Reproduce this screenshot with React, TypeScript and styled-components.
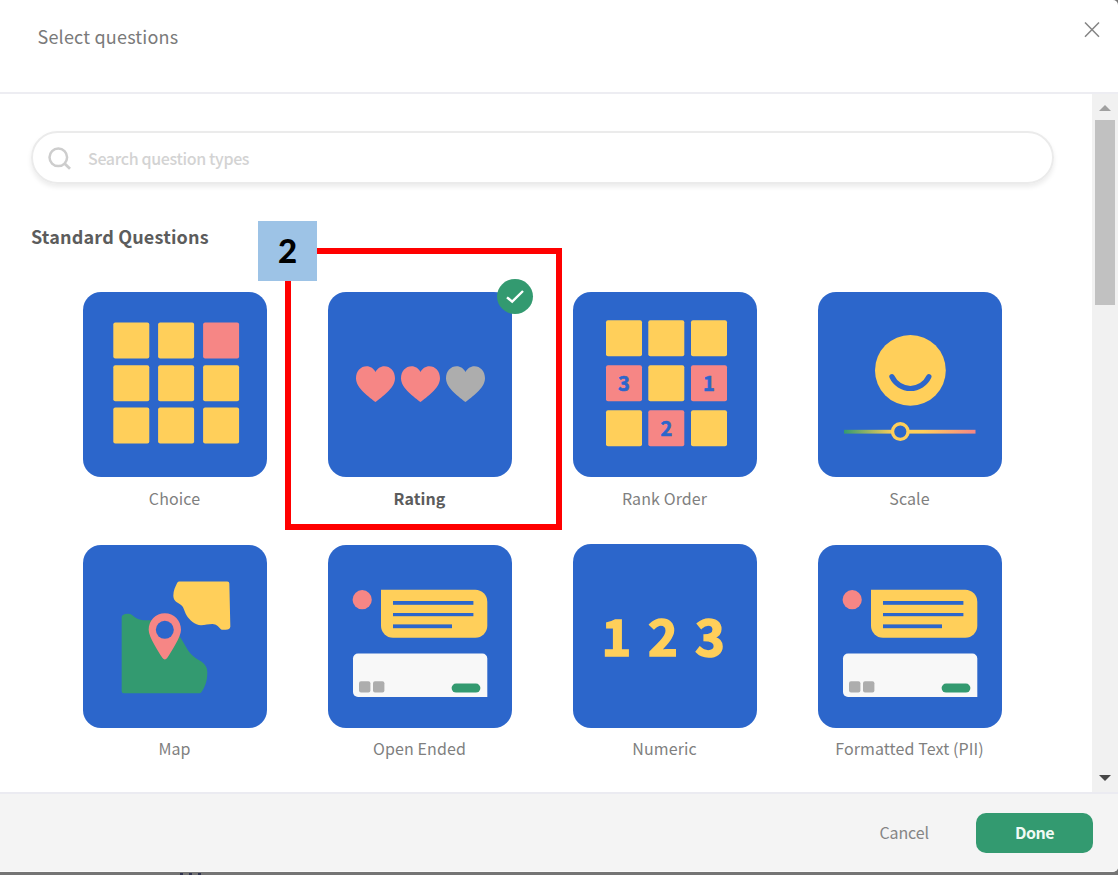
import { ReactNode } from 'react';
import styled, { createGlobalStyle } from 'styled-components';

const BLUE = '#2c66cb';
const YELLOW = '#ffcf5a';
const PINK = '#f68685';
const GREEN = '#339a70';
const GREY = '#adadad';

const GlobalStyle = createGlobalStyle`
  * {
    box-sizing: border-box;
  }
  body {
    margin: 0;
    background: #757575;
    font-family: 'Noto Sans CJK SC', 'Noto Sans', sans-serif;
    overflow: hidden;
  }
`;
const StyledPage = styled.div`
  position: relative;
  height: 875px;
  background: #757575;
`;
const StyledModal = styled.div`
  display: flex;
  flex-direction: column;
  height: 872px;
  background: #fff;
  border-bottom: 1px solid #fafafa;
  border-radius: 0 5px 5px 0;
  overflow: hidden;
`;
const StyledHeader = styled.header`
  display: flex;
  justify-content: space-between;
  flex: none;
  height: 94px;
  padding: 22px 18px 0 37.5px;
  border-bottom: 2px solid #ededf2;
`;
const StyledTitle = styled.h1`
  margin: 0;
  font-size: 18px;
  font-weight: 400;
  line-height: 28px;
  letter-spacing: 0.2px;
  color: #7a7a7a;
`;
const StyledClose = styled.button`
  width: 16px;
  height: 16px;
  padding: 0;
  border: 0;
  background: none;
  cursor: pointer;
  svg {
    display: block;
  }
`;
const StyledBody = styled.div`
  display: flex;
  height: 698px;
`;
const StyledMain = styled.main`
  flex: 1;
  padding: 37px 38px 0 31px;
`;
const StyledSearch = styled.label`
  display: flex;
  align-items: center;
  gap: 17px;
  height: 53px;
  padding-left: 15px;
  border: 2px solid #ebebeb;
  border-radius: 27px;
  box-shadow: 0 3px 5px rgba(0, 0, 0, 0.08);
  svg {
    margin-top: 2px;
  }
`;
const StyledInput = styled.input`
  flex: 1;
  padding: 0;
  border: 0;
  outline: 0;
  background: none;
  font: 500 16px 'Noto Sans CJK SC', 'Noto Sans', sans-serif;
  letter-spacing: -0.35px;
  &::placeholder {
    color: #d3d3d3;
    opacity: 1;
  }
`;
const StyledSectionTitle = styled.h2`
  margin: 37px 0 0;
  font-size: 18px;
  font-weight: 700;
  line-height: 30px;
  letter-spacing: 0.18px;
  color: #5c5c5c;
`;
const StyledGrid = styled.div`
  display: grid;
  grid-template-columns: repeat(4, 245px);
  margin: 41px 0 0 21px;
`;
const StyledItem = styled.div<{ $second?: boolean }>`
  display: flex;
  flex-direction: column;
  align-items: center;
  gap: ${(props) => (props.$second ? '8px' : '9px')};
  height: ${(props) => (props.$second ? '250px' : '252.5px')};
`;
const StyledTile = styled.div<{ $second?: boolean; $raised?: boolean }>`
  position: relative;
  width: 184px;
  height: ${(props) => (props.$second ? '183.5px' : '184.5px')};
  border-radius: 18px;
  background: ${BLUE};
  ${(props) => props.$raised && 'height: 184.5px; margin-top: -1px;'}
`;
const StyledArt = styled.svg`
  display: block;
  width: 184px;
  height: 184px;
  font-family: 'Noto Sans CJK SC', 'Noto Sans', sans-serif;
  font-weight: 700;
  text-anchor: middle;
`;
const StyledLabel = styled.span<{ $selected?: boolean }>`
  font-size: 16px;
  line-height: 24px;
  letter-spacing: 0.1px;
  white-space: nowrap;
  font-weight: ${(props) => (props.$selected ? 700 : 400)};
  color: ${(props) => (props.$selected ? '#5c5c5c' : '#7f7f7f')};
`;
const StyledCheck = styled.span`
  position: absolute;
  top: -13px;
  right: -21px;
  width: 36px;
  height: 35px;
  border-radius: 50%;
  background: ${GREEN};
`;
const StyledScrollbar = styled.div`
  display: flex;
  flex-direction: column;
  align-items: center;
  width: 26px;
  padding-bottom: 11px;
  background: #f1f1f1;
`;
const StyledArrow = styled.span<{ $down?: boolean }>`
  width: 0;
  margin: ${(props) => (props.$down ? 'auto 0 0' : '11px 0 9px')};
  border: 6px solid transparent;
  ${(props) =>
    props.$down
      ? 'border-top-color: #474747; border-bottom: 0;'
      : 'border-bottom-color: #a0a0a0; border-top: 0;'}
`;
const StyledThumb = styled.span`
  width: 20px;
  height: 185px;
  background: #c1c1c1;
`;
const StyledFooter = styled.footer`
  display: flex;
  align-items: center;
  justify-content: flex-end;
  gap: 47px;
  flex: 1;
  padding-right: 25px;
  border-top: 2px solid #ebebf1;
  background: #f4f4f4;
`;
const StyledButton = styled.button<{ $primary?: boolean }>`
  height: 40px;
  padding: 0 0 2px;
  border: 0;
  border-radius: 10px;
  font: 400 16px/38px 'Noto Sans CJK SC', 'Noto Sans', sans-serif;
  letter-spacing: -0.1px;
  color: #858585;
  background: none;
  cursor: pointer;
  ${(props) =>
    props.$primary &&
    `width: 117px; color: #effaf5; font-weight: 700; letter-spacing: -0.5px; background: ${GREEN};`}
`;
const StyledHighlight = styled.div`
  position: absolute;
  left: 285px;
  top: 248px;
  width: 277px;
  height: 282px;
  border: 6px solid #f00;
`;
const StyledStep = styled.div`
  position: absolute;
  left: 258px;
  top: 221px;
  width: 59px;
  height: 60px;
  background: #9dc3e6;
  color: #000;
  font: 900 33px/59px Lato, sans-serif;
  text-align: center;
`;
const StyledDots = styled.div`
  display: flex;
  gap: 6px;
  padding: 1px 0 0 180px;
  span {
    width: 3px;
    height: 2px;
    background: #30344f;
  }
`;

const Squares = (props: { xs: number[]; ys: number[]; pink: number[] }) => (
  <>
    {props.ys.map((y, row) =>
      props.xs.map((x, col) => (
        <rect
          key={`${row}-${col}`}
          x={x}
          y={y}
          width='36'
          height='36'
          rx='2'
          fill={props.pink.includes(row * 3 + col) ? PINK : YELLOW}
        />
      ))
    )}
  </>
);

const ChoiceArt = () => (
  <StyledArt viewBox='0 0 184 184'>
    <Squares xs={[30.3, 75.1, 120.1]} ys={[30.6, 73.2, 115.6]} pink={[2]} />
  </StyledArt>
);

const RatingArt = () => (
  <StyledArt viewBox='0 0 184 184'>
    {[28, 73, 118].map((x, index) => (
      <path
        key={x}
        transform={`translate(${x} 74)`}
        d='M19.5 36C14 31.5 0 22.5 0 12.2C0 5 4.8 0.2 10.6 0.2C14.5 0.2 17.8 2.4 19.5 6C21.2 2.4 24.5 0.2 28.4 0.2C34.2 0.2 39 5 39 12.2C39 22.5 25 31.5 19.5 36Z'
        fill={index < 2 ? PINK : GREY}
      />
    ))}
  </StyledArt>
);

const RankArt = () => (
  <StyledArt viewBox='0 0 184 184'>
    <Squares xs={[33, 75.3, 118]} ys={[28.2, 73.2, 118.2]} pink={[3, 5, 7]} />
    <g fill={BLUE} stroke={BLUE} strokeWidth='0.6' fontSize='20'>
      <text x='51' y='99'>3</text>
      <text x='136' y='99'>1</text>
      <text x='93.5' y='144'>2</text>
    </g>
  </StyledArt>
);

const ScaleArt = () => (
  <StyledArt viewBox='0 0 184 184'>
    <defs>
      <linearGradient
        id='scale'
        gradientUnits='userSpaceOnUse'
        x1='26'
        y1='0'
        x2='157.5'
        y2='0'
      >
        <stop offset='0' stopColor={GREEN} />
        <stop offset='0.38' stopColor={YELLOW} />
        <stop offset='0.6' stopColor={YELLOW} />
        <stop offset='1' stopColor={PINK} />
      </linearGradient>
    </defs>
    <circle cx='92.4' cy='78.4' r='35.4' fill={YELLOW} />
    <path
      d='M73.900 84.700A20.400 20.400 0 0 0 110.900 84.700'
      fill='none'
      stroke={BLUE}
      strokeWidth='5.2'
      strokeLinecap='round'
    />
    <rect x='26' y='137.8' width='131.5' height='3.8' fill='url(#scale)' />
    <circle
      cx='82.3'
      cy='139.6'
      r='7.8'
      fill={BLUE}
      stroke={YELLOW}
      strokeWidth='3.4'
    />
  </StyledArt>
);

const MapArt = () => (
  <StyledArt viewBox='38 28.5 552 552'>
    <path
      d='M154 246C154 237 166 235 174 235C190 235 192 254 220 254H270C310 270 335 310 348 336C362 362 380 370 393 378C405 387 411 396 411 410C411 438 403 456 393 470Q391 473 387 473H160Q154 473 154 467Z'
      fill={GREEN}
    />
    <path
      d='M326 138H471Q477 138 477 144L480 274Q479 283 466 283H458C447 283 444 266 430 266C417 265 406 269 392 269C374 269 357 253 349 240C341 225 341 213 329 206C317 199 309 194 309 180C309 164 315 154 320 143Q322 138 326 138Z'
      fill={YELLOW}
    />
    <path
      d='M283.500 233C256 233 235 254 235 283C235 304 263 347 276 367Q283.500 377 291 367C304 347 332 304 332 283C332 254 311 233 283.500 233Z'
      fill={PINK}
    />
    <circle cx='283.5' cy='283' r='27' fill={BLUE} />
  </StyledArt>
);

const MessageArt = () => (
  <StyledArt viewBox='0 0 184 184'>
    <circle cx='34.2' cy='54.7' r='9.6' fill={PINK} />
    <path
      d='M53 44.800H147.300A12 12 0 0 1 159.300 56.800V80.800A12 12 0 0 1 147.300 92.800H65A12 12 0 0 1 53 80.800Z'
      fill={YELLOW}
    />
    <g fill={BLUE}>
      <rect x='65' y='56' width='80.4' height='3.8' />
      <rect x='65' y='68' width='80.4' height='3.2' />
      <rect x='65' y='79.4' width='59' height='3.8' />
    </g>
    <path
      d='M30 108.500H154.300A5 5 0 0 1 159.300 113.500V152H30A5 5 0 0 1 25 147V113.500A5 5 0 0 1 30 108.500Z'
      fill='#f8f8f8'
    />
    <rect x='31' y='136.2' width='11.4' height='11.4' rx='2' fill={GREY} />
    <rect x='45' y='136.2' width='11.4' height='11.4' rx='2' fill={GREY} />
    <rect x='123.6' y='138.6' width='28.8' height='9' rx='4.5' fill={GREEN} />
  </StyledArt>
);

const NumericArt = () => (
  <StyledArt viewBox='0 0 184 184'>
    <g fill={YELLOW} stroke={YELLOW} strokeWidth='1.6' fontSize='50.5'>
      <text x='43.5' y='112.4'>1</text>
      <text x='90' y='112.4'>2</text>
      <text x='137' y='112.4'>3</text>
    </g>
  </StyledArt>
);

const questions: { name: string; art: ReactNode }[] = [
  { name: 'Choice', art: <ChoiceArt /> },
  { name: 'Rating', art: <RatingArt /> },
  { name: 'Rank Order', art: <RankArt /> },
  { name: 'Scale', art: <ScaleArt /> },
  { name: 'Map', art: <MapArt /> },
  { name: 'Open Ended', art: <MessageArt /> },
  { name: 'Numeric', art: <NumericArt /> },
  { name: 'Formatted Text (PII)', art: <MessageArt /> },
];

const App: React.FC = () => {
  const selected = 'Rating';
  return (
    <StyledPage>
      <GlobalStyle />
      <StyledModal>
        <StyledHeader>
          <StyledTitle>Select questions</StyledTitle>
          <StyledClose aria-label='Close'>
            <svg width='16' height='16' viewBox='0 0 16 16'>
              <path
                d='M1 0.500L15 14.700M15 0.500L1 14.700'
                stroke='#858585'
                strokeWidth='1.5'
              />
            </svg>
          </StyledClose>
        </StyledHeader>
        <StyledBody>
          <StyledMain>
            <StyledSearch>
              <svg width='23' height='23' viewBox='0 0 23 23' fill='none'>
                <circle cx='10.3' cy='10.3' r='8.8' stroke='#cdcdcd' strokeWidth='2.5' />
                <path d='M16.500 16.500L22 21.700' stroke='#cdcdcd' strokeWidth='2.8' />
              </svg>
              <StyledInput placeholder='Search question types' />
            </StyledSearch>
            <StyledSectionTitle>Standard Questions</StyledSectionTitle>
            <StyledGrid>
              {questions.map(({ name, art }, index) => (
                <StyledItem key={name} $second={index > 3}>
                  <StyledTile $second={index > 3} $raised={name === 'Numeric'}>
                    {art}
                    {name === selected && (
                      <StyledCheck>
                        <svg width='36' height='35' viewBox='0 0 36 35' fill='none'>
                          <path
                            d='M10 18.300L15.200 22.700L26 12'
                            stroke='#fff'
                            strokeWidth='2.4'
                          />
                        </svg>
                      </StyledCheck>
                    )}
                  </StyledTile>
                  <StyledLabel $selected={name === selected}>{name}</StyledLabel>
                </StyledItem>
              ))}
            </StyledGrid>
          </StyledMain>
          <StyledScrollbar>
            <StyledArrow />
            <StyledThumb />
            <StyledArrow $down />
          </StyledScrollbar>
        </StyledBody>
        <StyledFooter>
          <StyledButton>Cancel</StyledButton>
          <StyledButton $primary>Done</StyledButton>
        </StyledFooter>
      </StyledModal>
      <StyledDots>
        <span />
        <span />
        <span />
      </StyledDots>
      <StyledHighlight />
      <StyledStep>2</StyledStep>
    </StyledPage>
  );
};

export default App;
